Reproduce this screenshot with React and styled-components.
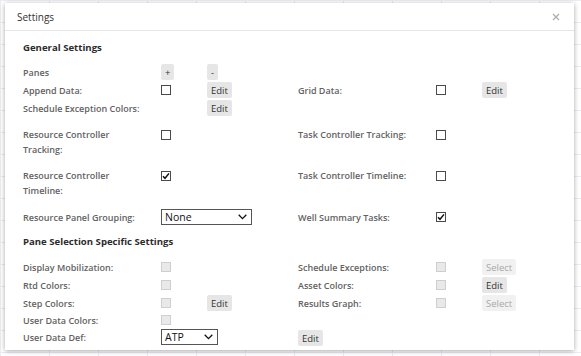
import styled, { createGlobalStyle } from "styled-components";

const GlobalStyle = createGlobalStyle`
  html, body { margin: 0; padding: 0; }
  body {
    width: 581px;
    height: 356px;
    overflow: hidden;
    font-family: "Open Sans", "Noto Sans", sans-serif;
    background-color: #fff;
    background-image:
      linear-gradient(to right, #ececf0 1px, transparent 1px),
      linear-gradient(to bottom, #ececf4 1px, transparent 1px);
    background-size: 49px 100%, 100% 22px;
  }
`;

const Dialog = styled.div`
  margin: 3px 0 0 5px;
  width: 569px;
  height: 347px;
  background: #fff;
  box-shadow: 0 1px 5px rgba(0, 0, 0, 0.35);
  display: flex;
  flex-direction: column;
`;

const Header = styled.div`
  height: 28px;
  box-sizing: border-box;
  border-bottom: 1px solid #e6e6e6;
  display: flex;
  align-items: center;
  justify-content: space-between;
  padding: 0 14px 0 12px;
  font-size: 10px;
  color: #333;
`;

const Close = styled.span`
  display: flex;
  width: 8px;
  height: 8px;
`;

const Body = styled.div`
  padding: 0 0 0 18px;
`;

const SectionTitle = styled.div`
  margin-top: ${(p) => p.$mt}px;
  height: 16px;
  line-height: 16px;
  font-size: 9.6px;
  font-weight: 700;
  color: #2b2b2b;
`;

const Row = styled.div`
  display: grid;
  grid-template-columns: 138px 46px 91px 138px 46px 1fr;
  align-items: ${(p) => (p.$top ? "start" : "center")};
  height: ${(p) => p.$h}px;
  margin-top: ${(p) => p.$mt || 0}px;
`;

const Label = styled.div`
  font-size: 9px;
  font-weight: 600;
  line-height: 15px;
  color: #626262;
  white-space: ${(p) => (p.$wrap ? "normal" : "nowrap")};
  padding-right: 20px;
`;

const Cell = styled.div`
  display: flex;
  align-items: center;
  margin-top: ${(p) => p.$mt || 0}px;
`;

const Box = styled.span`
  box-sizing: border-box;
  width: 10px;
  height: 10px;
  border: 1px solid ${(p) => (p.$disabled ? "#cfcfcf" : "#4a4a4a")};
  background: ${(p) => (p.$disabled ? "#e9e9e9" : "#fff")};
  display: flex;
  align-items: center;
  justify-content: center;
`;

const Button = styled.span`
  display: inline-flex;
  align-items: center;
  justify-content: center;
  height: 16px;
  min-width: ${(p) => p.$w || 0}px;
  padding: 0 4px;
  box-sizing: border-box;
  border-radius: 2px;
  background: ${(p) => (p.$disabled ? "#f1f1f1" : "#e6e6e6")};
  color: ${(p) => (p.$disabled ? "#a8a8a8" : "#333")};
  font-size: 9.5px;
`;

const Select = styled.div`
  box-sizing: border-box;
  width: ${(p) => p.$w}px;
  height: 16px;
  border: 1px solid #555;
  display: flex;
  align-items: center;
  justify-content: space-between;
  padding: 0 4px 0 3px;
  font-size: 10.5px;
  color: #111;
  background: #fff;
`;

const Check = ({ checked, disabled }) => (
  <Box $disabled={disabled}>
    {checked && (
      <svg width="8" height="8" viewBox="0 0 8 8">
        <path d="M1 4.2 L3 6.3 L7 1.4" fill="none" stroke="#111" strokeWidth="1.5" />
      </svg>
    )}
  </Box>
);

const Dropdown = ({ w, value }) => (
  <Select $w={w}>
    <span>{value}</span>
    <svg width="9" height="6" viewBox="0 0 9 6">
      <path d="M0.7 0.8 L4.5 4.6 L8.3 0.8" fill="none" stroke="#111" strokeWidth="1.3" />
    </svg>
  </Select>
);

export default function App() {
  return (
    <>
      <GlobalStyle />
      <Dialog>
        <Header>
          <span>Settings</span>
          <Close>
            <svg width="8" height="8" viewBox="0 0 8 8">
              <path d="M1 1 L7 7 M7 1 L1 7" stroke="#b0b0b0" strokeWidth="1.4" />
            </svg>
          </Close>
        </Header>
        <Body>
          <SectionTitle $mt={9}>General Settings</SectionTitle>

          <Row $h={18} $mt={7}>
            <Label>Panes</Label>
            <Cell><Button $w={13}>+</Button></Cell>
            <Cell><Button $w={10}>-</Button></Cell>
          </Row>
          <Row $h={18}>
            <Label>Append Data:</Label>
            <Cell><Check /></Cell>
            <Cell><Button>Edit</Button></Cell>
            <Label>Grid Data:</Label>
            <Cell><Check /></Cell>
            <Cell><Button>Edit</Button></Cell>
          </Row>
          <Row $h={18}>
            <Label>Schedule Exception Colors:</Label>
            <Cell />
            <Cell><Button>Edit</Button></Cell>
          </Row>

          <Row $h={30} $mt={10} $top>
            <Label $wrap>Resource Controller Tracking:</Label>
            <Cell $mt={3}><Check /></Cell>
            <Cell />
            <Label>Task Controller Tracking:</Label>
            <Cell $mt={3}><Check /></Cell>
          </Row>
          <Row $h={30} $mt={11} $top>
            <Label $wrap>Resource Controller Timeline:</Label>
            <Cell $mt={3}><Check checked /></Cell>
            <Cell />
            <Label>Task Controller Timeline:</Label>
            <Cell $mt={3}><Check /></Cell>
          </Row>
          <Row $h={18} $mt={10}>
            <Label>Resource Panel Grouping:</Label>
            <Cell style={{ gridColumn: "span 2" }}><Dropdown w={91} value="None" /></Cell>
            <Label>Well Summary Tasks:</Label>
            <Cell><Check checked /></Cell>
          </Row>

          <SectionTitle $mt={8}>Pane Selection Specific Settings</SectionTitle>

          <Row $h={18} $mt={8}>
            <Label>Display Mobilization:</Label>
            <Cell><Check disabled /></Cell>
            <Cell />
            <Label>Schedule Exceptions:</Label>
            <Cell><Check disabled /></Cell>
            <Cell><Button $disabled>Select</Button></Cell>
          </Row>
          <Row $h={18}>
            <Label>Rtd Colors:</Label>
            <Cell><Check disabled /></Cell>
            <Cell />
            <Label>Asset Colors:</Label>
            <Cell><Check disabled /></Cell>
            <Cell><Button>Edit</Button></Cell>
          </Row>
          <Row $h={18}>
            <Label>Step Colors:</Label>
            <Cell><Check disabled /></Cell>
            <Cell><Button>Edit</Button></Cell>
            <Label>Results Graph:</Label>
            <Cell><Check disabled /></Cell>
            <Cell><Button $disabled>Select</Button></Cell>
          </Row>
          <Row $h={16}>
            <Label>User Data Colors:</Label>
            <Cell><Check disabled /></Cell>
          </Row>
          <Row $h={16}>
            <Label>User Data Def:</Label>
            <Cell style={{ gridColumn: "span 2" }}><Dropdown w={57} value="ATP" /></Cell>
            <Cell $mt={2}><Button>Edit</Button></Cell>
          </Row>
        </Body>
      </Dialog>
    </>
  );
}
